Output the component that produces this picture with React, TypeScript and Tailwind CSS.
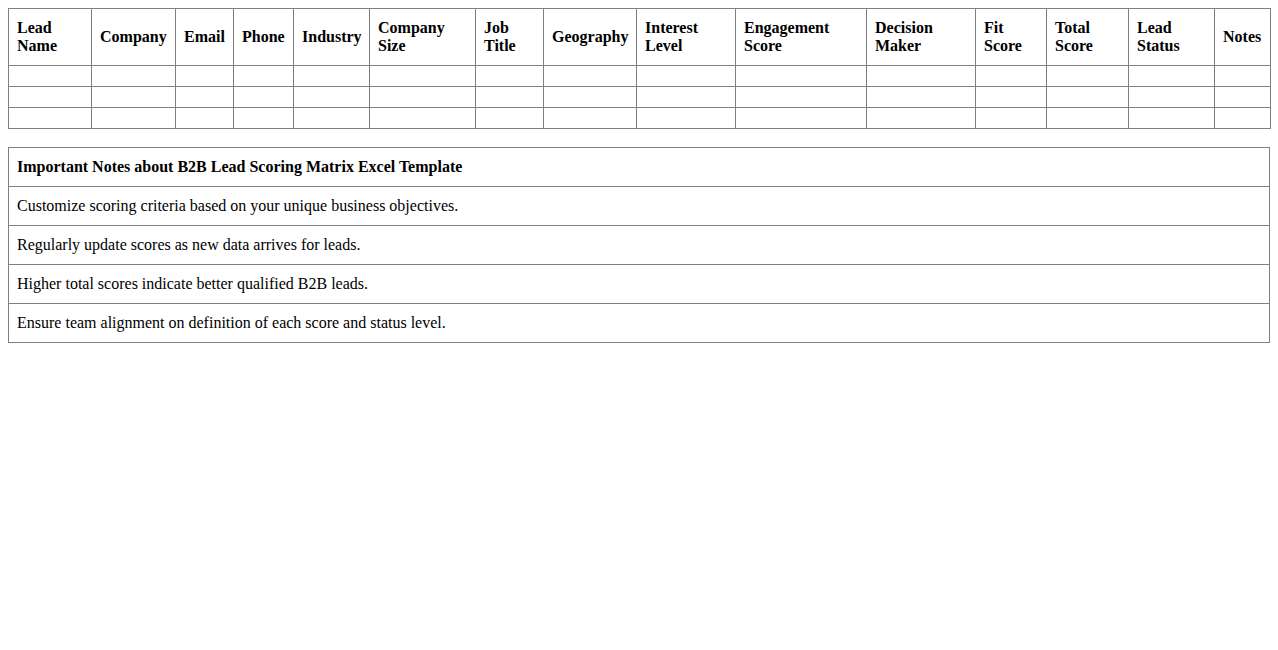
import React from 'react';

const columns: { label: string; width: string }[] = [
  { label: 'Lead Name', width: 'w-[83px]' },
  { label: 'Company', width: 'w-[84px]' },
  { label: 'Email', width: 'w-[58px]' },
  { label: 'Phone', width: 'w-[60px]' },
  { label: 'Industry', width: 'w-[76px]' },
  { label: 'Company Size', width: 'w-[106px]' },
  { label: 'Job Title', width: 'w-[68px]' },
  { label: 'Geography', width: 'w-[93px]' },
  { label: 'Interest Level', width: 'w-[99px]' },
  { label: 'Engagement Score', width: 'w-[131px]' },
  { label: 'Decision Maker', width: 'w-[109px]' },
  { label: 'Fit Score', width: 'w-[71px]' },
  { label: 'Total Score', width: 'w-[82px]' },
  { label: 'Lead Status', width: 'w-[86px]' },
  { label: 'Notes', width: 'w-[56px]' },
];

const notes = [
  'Customize scoring criteria based on your unique business objectives.',
  'Regularly update scores as new data arrives for leads.',
  'Higher total scores indicate better qualified B2B leads.',
  'Ensure team alignment on definition of each score and status level.',
];

export default function App() {
  return (
    <div className="min-h-screen bg-white p-2 text-black font-['Liberation_Serif','Times_New_Roman',serif] text-base">
      {/* Scoring matrix */}
      <table className="w-full table-fixed border-collapse">
        <thead>
          <tr>
            {columns.map((c) => (
              <th
                key={c.label}
                className={`${c.width} border border-[#808080] px-2 py-[10px] text-left align-middle font-bold leading-[18px]`}
              >
                {c.label}
              </th>
            ))}
          </tr>
        </thead>
        <tbody>
          {[0, 1, 2].map((r) => (
            <tr key={r}>
              {columns.map((c) => (
                <td key={c.label} className="border border-[#808080] px-2 py-[10px]" />
              ))}
            </tr>
          ))}
        </tbody>
      </table>

      {/* Notes */}
      <table className="mt-[18px] w-full border-collapse">
        <thead>
          <tr>
            <th className="border border-[#808080] px-2 py-[10px] text-left font-bold leading-[18px]">
              Important Notes about B2B Lead Scoring Matrix Excel Template
            </th>
          </tr>
        </thead>
        <tbody>
          {notes.map((n) => (
            <tr key={n}>
              <td className="border border-[#808080] px-2 py-[10px] leading-[18px]">{n}</td>
            </tr>
          ))}
        </tbody>
      </table>
    </div>
  );
}
